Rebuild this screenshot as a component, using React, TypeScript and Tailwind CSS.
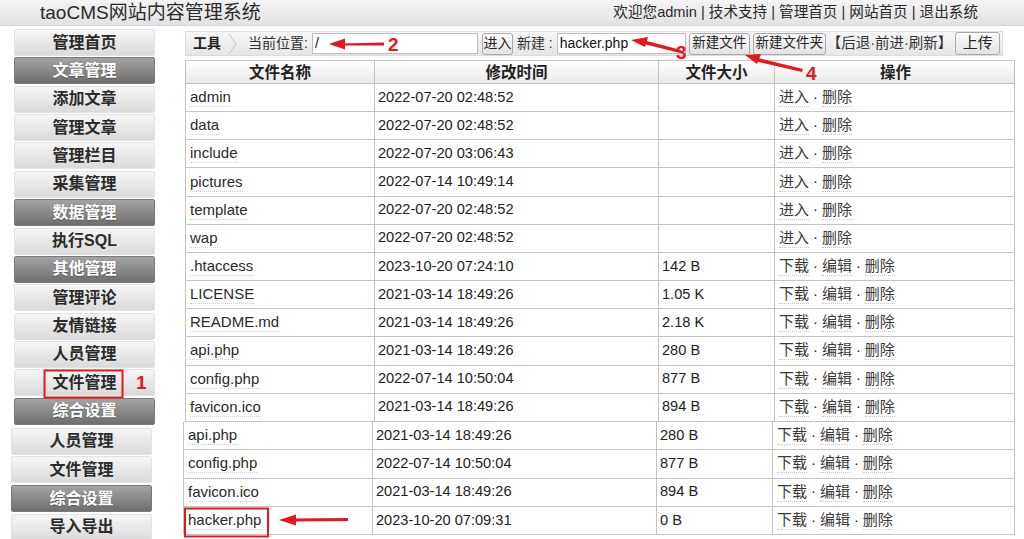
import React from "react";

const font = { fontFamily: '"Liberation Sans", Arial, "Noto Sans CJK SC", sans-serif' };

type Item = { t: string; dark?: boolean };
const side1: Item[] = [
  { t: "管理首页" },
  { t: "文章管理", dark: true },
  { t: "添加文章" },
  { t: "管理文章" },
  { t: "管理栏目" },
  { t: "采集管理" },
  { t: "数据管理", dark: true },
  { t: "执行SQL" },
  { t: "其他管理", dark: true },
  { t: "管理评论" },
  { t: "友情链接" },
  { t: "人员管理" },
  { t: "文件管理" },
  { t: "综合设置", dark: true },
];
const side2: Item[] = [
  { t: "人员管理" },
  { t: "文件管理" },
  { t: "综合设置", dark: true },
  { t: "导入导出" },
];

type Row = { n: string; d: string; s: string; dir?: boolean };
const rows1: Row[] = [
  { n: "admin", d: "2022-07-20 02:48:52", s: "", dir: true },
  { n: "data", d: "2022-07-20 02:48:52", s: "", dir: true },
  { n: "include", d: "2022-07-20 03:06:43", s: "", dir: true },
  { n: "pictures", d: "2022-07-14 10:49:14", s: "", dir: true },
  { n: "template", d: "2022-07-20 02:48:52", s: "", dir: true },
  { n: "wap", d: "2022-07-20 02:48:52", s: "", dir: true },
  { n: ".htaccess", d: "2023-10-20 07:24:10", s: "142 B" },
  { n: "LICENSE", d: "2021-03-14 18:49:26", s: "1.05 K" },
  { n: "README.md", d: "2021-03-14 18:49:26", s: "2.18 K" },
  { n: "api.php", d: "2021-03-14 18:49:26", s: "280 B" },
  { n: "config.php", d: "2022-07-14 10:50:04", s: "877 B" },
  { n: "favicon.ico", d: "2021-03-14 18:49:26", s: "894 B" },
];
const rows2: Row[] = [
  { n: "api.php", d: "2021-03-14 18:49:26", s: "280 B" },
  { n: "config.php", d: "2022-07-14 10:50:04", s: "877 B" },
  { n: "favicon.ico", d: "2021-03-14 18:49:26", s: "894 B" },
  { n: "hacker.php", d: "2023-10-20 07:09:31", s: "0 B" },
];

function SideBtn({ it, h }: { it: Item; h: string }) {
  return (
    <div
      className={
        "w-[141px] flex items-center justify-center text-[16px] font-bold rounded-[2px] " +
        h +
        " " +
        (it.dark
          ? "bg-gradient-to-b from-[#a3a3a3] to-[#6f6f6f] text-white border border-[#7a7a7a]"
          : "bg-gradient-to-b from-[#f6f6f6] to-[#dadada] text-[#2b2b2b] border border-[#e2e2e2]")
      }
      style={it.dark ? { textShadow: "0 1px 1px rgba(0,0,0,0.3)" } : undefined}
    >
      {it.t}
    </div>
  );
}

function Link({ t }: { t: string }) {
  return <span className="text-[#3a3a3a] text-[15px] border-b border-dotted border-[#c8c8c8] leading-[18px]">{t}</span>;
}

function TRow({ r, h }: { r: Row; h: string }) {
  return (
    <div className={"grid grid-cols-[189px_284px_116px_241px] border-b border-[#c4c4c4] text-[14.6px] text-[#222] " + h}>
      <div className="border-r border-[#c4c4c4] flex items-center pl-[4px]">
        <span className="text-[15px] text-[#2a2a2a] border-b border-dotted border-[#cfcfcf] leading-[18px]">{r.n}</span>
      </div>
      <div className="border-r border-[#c4c4c4] flex items-center pl-[3px]">{r.d}</div>
      <div className="border-r border-[#c4c4c4] flex items-center pl-[3px]">{r.s}</div>
      <div className="flex items-center pl-[4px] gap-[4px]">
        {r.dir ? (
          <>
            <Link t="进入" />·<Link t="删除" />
          </>
        ) : (
          <>
            <Link t="下载" />·<Link t="编辑" />·<Link t="删除" />
          </>
        )}
      </div>
    </div>
  );
}

function Btn({ t, cls }: { t: string; cls: string }) {
  return (
    <div
      className={
        "shrink-0 flex items-center justify-center rounded-[3px] border border-[#a9a9a9] bg-gradient-to-b from-[#fbfbfb] to-[#e3e3e3] text-[#222] " +
        cls
      }
    >
      {t}
    </div>
  );
}

export default function App() {
  return (
    <div className="relative w-[1024px] h-[539px] overflow-hidden bg-white" style={font}>
      {/* header */}
      <div className="h-[26px] bg-gradient-to-b from-[#f4f4f4] to-[#e2e2e2] flex items-center justify-between border-b border-[#d4d4d4]">
        <div className="pl-[40px] text-[19px] text-[#2a2a2a] leading-none">taoCMS网站内容管理系统</div>
        <div className="pr-[46px] text-[14.6px] text-[#2a2a2a] leading-none">
          欢迎您admin | 技术支持 | 管理首页 | 网站首页 | 退出系统
        </div>
      </div>

      <div className="flex">
        {/* sidebar */}
        <div className="w-[185px] shrink-0 pl-[14px] pt-[3px] flex flex-col">
          <div className="flex flex-col gap-[1.36px]">
            {side1.map((it, i) => (
              <SideBtn key={i} it={it} h="h-[27px]" />
            ))}
          </div>
          <div className="flex flex-col gap-[1.7px] ml-[-3px] mt-[3px]">
            {side2.map((it, i) => (
              <SideBtn key={i} it={it} h="h-[27px]" />
            ))}
          </div>
        </div>

        {/* content */}
        <div className="w-[839px] shrink-0 pt-[5px]">
          {/* toolbar */}
          <div className="w-[818px] h-[25px] bg-gradient-to-b from-[#f6f6f6] to-[#e6e6e6] border border-[#dcdcdc] flex items-center text-[14px] text-[#333] whitespace-nowrap overflow-hidden">
            <span className="shrink-0 pl-[7px] font-bold text-[#222]">工具</span>
            <svg width="14" height="24" viewBox="0 0 14 24" className="shrink-0 ml-[4px]">
              <path d="M4 2 L11 12 L4 22" stroke="#d0d0d0" strokeWidth="1.2" fill="none" />
            </svg>
            <span className="shrink-0 ml-[9px]">当前位置:</span>
            <div className="shrink-0 ml-[4px] w-[166px] h-[21px] bg-white border border-[#bdbdbd] flex items-center pl-[2px] text-[#111]">/</div>
            <Btn t="进入" cls="ml-[4px] w-[31px] h-[22px] text-[14px]" />
            <span className="shrink-0 ml-[4px]">新建 :</span>
            <div className="shrink-0 ml-[4px] w-[129px] h-[21px] bg-white border border-[#bdbdbd] flex items-center pl-[2px] text-[#111]">hacker.php</div>
            <Btn t="新建文件" cls="ml-[3px] w-[61px] h-[22px] text-[13.5px]" />
            <Btn t="新建文件夹" cls="ml-[3px] w-[73px] h-[22px] text-[13.5px]" />
            <span className="shrink-0 ml-[1px] text-[14.5px]">【后退·前进·刷新】</span>
            <Btn t="上传" cls="ml-[3px] w-[45px] h-[23px] text-[15px]" />
          </div>

          {/* table */}
          <div className="mt-[4px] w-[830px] border-l border-r border-[#c4c4c4]">
            <div className="grid grid-cols-[189px_284px_116px_241px] h-[24px] bg-gradient-to-b from-[#ffffff] to-[#e9e9e9] border-t border-b border-[#c4c4c4] text-[15.5px] font-bold text-[#222]">
              <div className="border-r border-[#c4c4c4] flex items-center justify-center">文件名称</div>
              <div className="border-r border-[#c4c4c4] flex items-center justify-center">修改时间</div>
              <div className="border-r border-[#c4c4c4] flex items-center justify-center">文件大小</div>
              <div className="flex items-center justify-center">操作</div>
            </div>
            {rows1.map((r, i) => (
              <TRow key={i} r={r} h="h-[28.17px]" />
            ))}
          </div>
          <div className="ml-[-2px] w-[832px] border-l border-r border-[#c4c4c4]">
            {rows2.map((r, i) => (
              <TRow key={i} r={r} h="h-[28.4px]" />
            ))}
          </div>
        </div>
      </div>

      {/* annotations overlay */}
      <svg className="absolute left-0 top-0 pointer-events-none" width="1024" height="539" viewBox="0 0 1024 539">
        <g fill="#e8161c" stroke="none">
          <path d="M343 43.5 L384 42.5 L384 45.5 L343 45.5 Z" />
          <path d="M329 44 L345 38.5 L345 49.5 Z" />
          <path d="M645 40.5 L681 50 L680 53 L644 44 Z" />
          <path d="M631 40 L648 37 L645 47 Z" />
          <path d="M758 58 L803 69 L802 72 L757 61.5 Z" />
          <path d="M745 55 L761 54 L757 64 Z" />
          <path d="M294 518.5 L348 518 L348 521 L294 521.5 Z" />
          <path d="M279 520 L296 514.5 L296 525.5 Z" />
        </g>
        <g fill="#e8161c" fontFamily='"Liberation Sans", Arial, sans-serif' fontWeight="bold" fontSize="19">
          <text x="388" y="51">2</text>
          <text x="676" y="59">3</text>
          <text x="806" y="80">4</text>
          <text x="136" y="389">1</text>
        </g>
        <rect x="44.5" y="370.5" width="78" height="27" fill="none" stroke="#e8161c" strokeWidth="2" />
        <rect x="185" y="508.5" width="83" height="28" fill="none" stroke="#e8161c" strokeWidth="2" />
      </svg>
    </div>
  );
}
